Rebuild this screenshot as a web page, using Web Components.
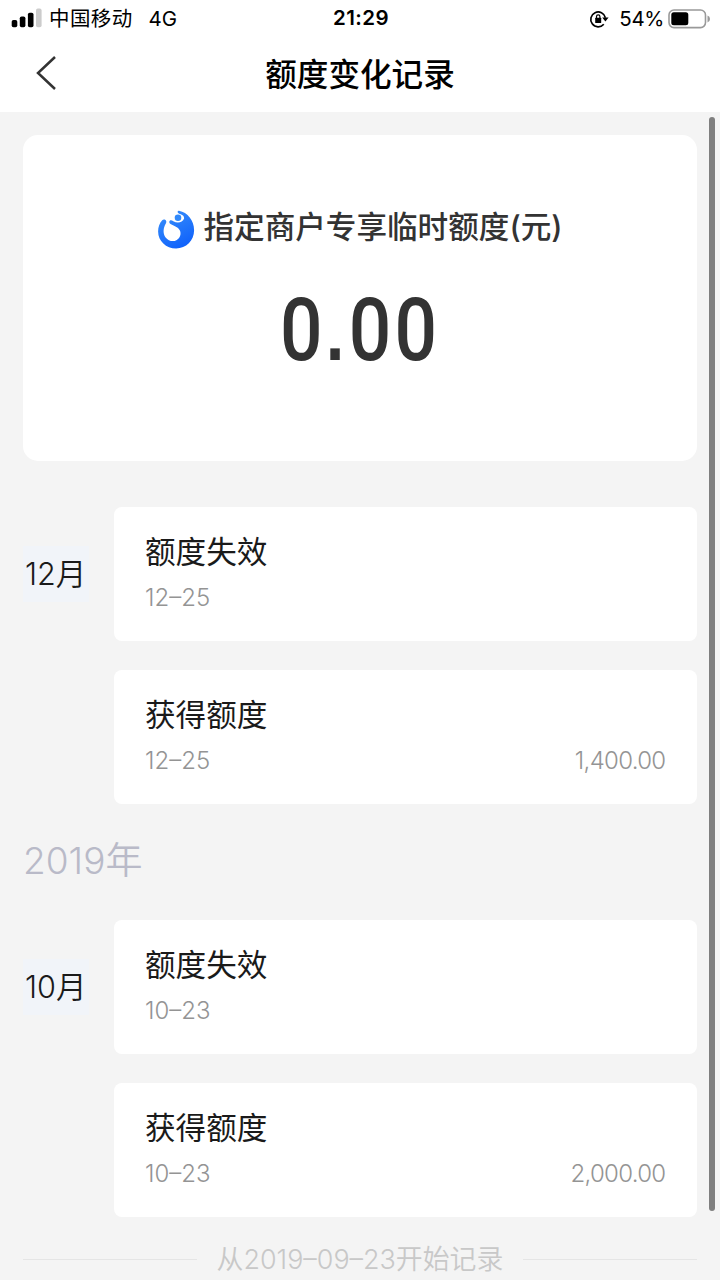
<!DOCTYPE html>
<html lang="zh-CN">
<head>
<meta charset="UTF-8">
<meta name="viewport" content="width=device-width, initial-scale=1.0">
<title>额度变化记录</title>
<style>
  body {
    margin: 0;
    width: 720px;
    height: 1280px;
    overflow: hidden;
    background: #f4f4f4;
    font-family: Inter, "Noto Sans CJK SC", sans-serif;
    color: #1a1a1a;
  }
</style>
</head>
<body>
<quota-page>
  <status-bar slot="header" carrier="中国移动" network="4G" time="21:29" battery="54%"></status-bar>
  <nav-bar slot="header">额度变化记录</nav-bar>
  <quota-summary amount="0.00">指定商户专享临时额度(元)</quota-summary>
  <month-group month="12月">
    <record-card date="12–25">额度失效</record-card>
    <record-card date="12–25" amount="1,400.00">获得额度</record-card>
  </month-group>
  <year-title>2019年</year-title>
  <month-group month="10月">
    <record-card date="10–23">额度失效</record-card>
    <record-card date="10–23" amount="2,000.00">获得额度</record-card>
  </month-group>
  <end-note>从2019–09–23开始记录</end-note>
</quota-page>

<script>
class BaseElement extends HTMLElement {
  constructor() {
    super();
    this.attachShadow({ mode: 'open' });
  }

  connectedCallback() {
    this.shadowRoot.innerHTML = this.render();
  }

  attr(name) {
    return this.getAttribute(name) || '';
  }
}

class QuotaPage extends BaseElement {
  render() {
    return `
      <style>
        :host { display: block; position: relative; height: 1280px; }
        header { height: 112px; background: #fff; }
        main { padding: 23px 23px 0; }
        .scrollbar {
          position: absolute;
          top: 117px;
          right: 5px;
          width: 6px;
          height: 1094px;
          border-radius: 3px;
          background: #7f7f7f;
        }
      </style>
      <header><slot name="header"></slot></header>
      <main><slot></slot></main>
      <div class="scrollbar"></div>
    `;
  }
}

class StatusBar extends BaseElement {
  render() {
    return `
      <style>
        :host {
          display: grid;
          grid-template-columns: 1fr auto 1fr;
          align-items: center;
          height: 37px;
          padding: 0 9px 0 11px;
          box-sizing: border-box;
          color: #000;
          font-size: 20.5px;
          line-height: 36px;
        }
        .left, .right { display: flex; align-items: center; height: 37px; }
        .right { justify-content: flex-end; }
        .left svg { margin-bottom: 1px; }
        .carrier { margin-left: 7px; padding-top: 1px; letter-spacing: 0.4px; }
        .network { margin-left: 16px; }
        .time { height: 37px; font-weight: 600; letter-spacing: 0.4px; }
        .battery { margin: 0 4px 0 10px; letter-spacing: -0.4px; }
        svg { display: block; }
      </style>
      <div class="left">
        <svg width="31" height="20" viewBox="0 0 31 20">
          <rect x=".7" y="12" width="5.6" height="7.3" rx="1.8"/>
          <rect x="8.8" y="8.5" width="5.6" height="10.8" rx="1.8"/>
          <rect x="16.9" y="4.7" width="5.6" height="14.6" rx="1.8"/>
          <rect x="25" y=".6" width="5.6" height="18.7" rx="1.8" fill="#ccc"/>
        </svg>
        <span class="carrier">${this.attr('carrier')}</span>
        <span class="network">${this.attr('network')}</span>
      </div>
      <span class="time">${this.attr('time')}</span>
      <div class="right">
        <svg width="20" height="20" viewBox="0 0 20 20">
          <path d="M14.8 15.2A7.4 7.4 0 1 1 16.4 8.8" fill="none" stroke="#000" stroke-width="1.7"/>
          <path d="M13.2 8.6H19.6L16.4 12.4Z"/>
          <rect x="6.2" y="8.8" width="6" height="5.2" rx=".5"/>
          <path d="M7.5 9.5V7.6a1.7 1.7 0 0 1 3.4 0v1.9" fill="none" stroke="#000" stroke-width="1.2"/>
        </svg>
        <span class="battery">${this.attr('battery')}</span>
        <svg width="43" height="20" viewBox="0 0 43 20">
          <rect x="1" y="1" width="36.5" height="17.6" rx="5" fill="#fff" stroke="#999" stroke-width="1.6"/>
          <rect x="3.3" y="3.3" width="17" height="13" rx="2.5"/>
          <path d="M39.5 6.5Q42 7.2 42 10T39.5 13.5Z" fill="#999"/>
        </svg>
      </div>
    `;
  }
}

class NavBar extends BaseElement {
  render() {
    return `
      <style>
        :host {
          display: grid;
          grid-template-columns: 100px 1fr 100px;
          align-items: center;
          height: 75px;
          color: #000;
        }
        svg { display: block; margin: 0 0 3px 35px; }
        h1 {
          margin: 0;
          text-align: center;
          font-size: 31.6px;
          font-weight: 500;
          line-height: 74px;
        }
      </style>
      <svg width="22" height="34" viewBox="0 0 22 34">
        <path d="M20 1L3 17L20 33" fill="none" stroke="#333" stroke-width="2.5"/>
      </svg>
      <h1><slot></slot></h1>
    `;
  }
}

class QuotaSummary extends BaseElement {
  render() {
    // the decimal point is square, unlike the one in the digits' font
    const amount = this.attr('amount').replace('.', '<span class="point">.</span>');
    return `
      <style>
        :host {
          display: flex;
          flex-direction: column;
          align-items: center;
          height: 326px;
          padding-top: 68px;
          box-sizing: border-box;
          border-radius: 15px;
          background: #fff;
          color: #333;
        }
        .label {
          display: flex;
          align-items: center;
          gap: 8px;
          height: 48px;
          font-size: 30.6px;
          font-weight: 500;
          line-height: 48px;
          white-space: nowrap;
        }
        svg { display: block; margin-top: 5px; }
        .amount {
          margin-top: 27px;
          font-family: Roboto, sans-serif;
          font-size: 87px;
          font-weight: 500;
          line-height: 104px;
          letter-spacing: 3.8px;
          transform: scaleX(0.86);
        }
        .point {
          font-family: "Liberation Sans", sans-serif;
          font-size: 78px;
          font-weight: bold;
          line-height: 1;
          letter-spacing: 5px;
        }
      </style>
      <div class="label">
        <svg width="38" height="40" viewBox="0 0 38 40">
          <defs>
            <linearGradient id="blue" x1="0" y1="0" x2="0.5" y2="1">
              <stop offset="0" stop-color="#3b92fa"/>
              <stop offset="1" stop-color="#1264fb"/>
            </linearGradient>
          </defs>
          <g transform="translate(.6 .4)">
            <path fill="url(#blue)" d="M21.4 .4C30 2 36.5 10 36.5 19.8C36.5 30.3 28.5 38 18.5 38S.5 30.5 .5 21C.5 16.5 2 12.5 4.6 9.8C5.8 8.6 8.4 9 8.7 11C8.9 12.5 7.8 13.6 7.2 15C5.3 19.5 5.8 24 8 27C10.8 30.7 15.5 31.5 18.8 29.8C22.8 27.8 24 23.2 22 19.7C20.3 16.7 16.8 15.6 13.4 13.9C11.5 12.9 11.3 11.4 12.2 10.4C13.2 9.4 14.4 10 15.7 10.9C19.8 13.3 24.9 12.4 26.5 8.1C26.8 5.2 23.8 4.2 21.2 3.2C19.4 2.3 19.8 .2 21.4 .4Z"/>
            <circle cx="20.4" cy="7.4" r="3.3" fill="#3189fa"/>
          </g>
        </svg>
        <slot></slot>
      </div>
      <div class="amount">${amount}</div>
    `;
  }
}

class MonthGroup extends BaseElement {
  render() {
    return `
      <style>
        :host { display: grid; grid-template-columns: 91px 1fr; margin-top: 46px; }
        .month {
          width: 66px;
          height: 56px;
          margin-top: 39px;
          box-sizing: border-box;
          padding-left: 2px;
          background: #f1f4f9;
          font-size: 30.6px;
          font-weight: 350;
          line-height: 56px;
          white-space: nowrap;
        }
        .records { display: flex; flex-direction: column; gap: 29px; }
      </style>
      <div class="month">${this.attr('month')}</div>
      <div class="records"><slot></slot></div>
    `;
  }
}

class RecordCard extends BaseElement {
  render() {
    return `
      <style>
        :host {
          display: block;
          height: 134px;
          padding: 22px 31px 0;
          box-sizing: border-box;
          border-radius: 8px;
          background: #fff;
        }
        .title { font-size: 30.6px; line-height: 46px; }
        .detail {
          display: flex;
          justify-content: space-between;
          margin-top: 5px;
          color: #949494;
          font-size: 24px;
          font-weight: 350;
          line-height: 36px;
        }
        .amount { letter-spacing: -0.7px; margin-right: 0.6px; }
      </style>
      <div class="title"><slot></slot></div>
      <div class="detail">
        <span>${this.attr('date')}</span>
        <span class="amount">${this.attr('amount')}</span>
      </div>
    `;
  }
}

class YearTitle extends BaseElement {
  render() {
    return `
      <style>
        :host {
          display: block;
          height: 70px;
          padding-top: 22px;
          box-sizing: border-box;
          color: #b9bac8;
          font-size: 37px;
          font-weight: 350;
          line-height: 70px;
        }
      </style>
      <slot></slot>
    `;
  }
}

class EndNote extends BaseElement {
  render() {
    return `
      <style>
        :host {
          display: flex;
          align-items: center;
          gap: 20px;
          height: 40px;
          margin-top: 22px;
          color: #c8c8c8;
          font-size: 26.9px;
          font-weight: 350;
          line-height: 42px;
          white-space: nowrap;
        }
        i { flex: 1; height: 1px; background: #e5e5e5; }
      </style>
      <i></i>
      <span><slot></slot></span>
      <i></i>
    `;
  }
}

customElements.define('quota-page', QuotaPage);
customElements.define('status-bar', StatusBar);
customElements.define('nav-bar', NavBar);
customElements.define('quota-summary', QuotaSummary);
customElements.define('month-group', MonthGroup);
customElements.define('record-card', RecordCard);
customElements.define('year-title', YearTitle);
customElements.define('end-note', EndNote);
</script>
</body>
</html>
